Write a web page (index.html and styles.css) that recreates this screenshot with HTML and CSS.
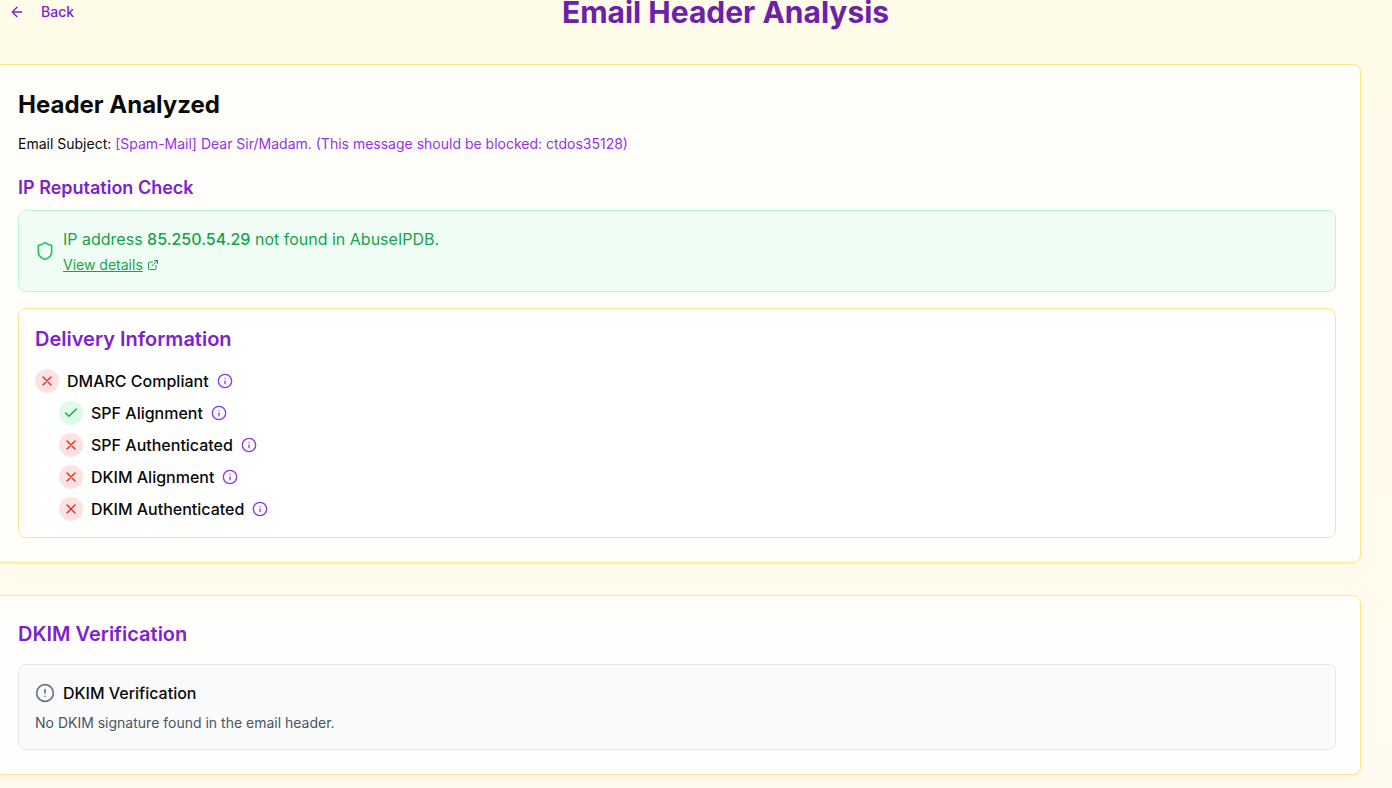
FILE: index.html
```html
<!DOCTYPE html>
<html lang="en">
<head>
<meta charset="utf-8">
<meta name="viewport" content="width=device-width, initial-scale=1">
<title>Email Header Analysis</title>
<link rel="stylesheet" href="styles.css">
</head>
<body>
<svg class="symbols" aria-hidden="true">
  <symbol id="arrow-left" viewBox="0 0 24 24"><path d="m12 19-7-7 7-7M19 12H5"/></symbol>
  <symbol id="shield" viewBox="0 0 24 24"><path d="M20 13c0 5-3.5 7.5-7.66 8.95a1 1 0 0 1-.67-.01C7.5 20.5 4 18 4 13V6a1 1 0 0 1 1-1c2 0 4.500-1.200 6.240-2.720a1.170 1.170 0 0 1 1.520 0C14.510 3.810 17 5 19 5a1 1 0 0 1 1 1z"/></symbol>
  <symbol id="external" viewBox="0 0 24 24"><path d="M15 3h6v6M10 14 21 3M18 13v6a2 2 0 0 1-2 2H5a2 2 0 0 1-2-2V8a2 2 0 0 1 2-2h6"/></symbol>
  <symbol id="cross" viewBox="0 0 24 24"><path d="M18 6 6 18M6 6l12 12"/></symbol>
  <symbol id="check" viewBox="0 0 24 24"><path d="M20 6 9 17l-5-5"/></symbol>
  <symbol id="info" viewBox="0 0 24 24"><circle cx="12" cy="12" r="10"/><path d="M12 16v-4M12 8h.01"/></symbol>
  <symbol id="alert" viewBox="0 0 24 24"><circle cx="12" cy="12" r="10"/><path d="M12 8v4M12 16h.01"/></symbol>
</svg>
<div class="page">
  <header class="page-header">
    <button class="back" type="button"><svg class="icon"><use href="#arrow-left"/></svg>Back</button>
    <h1>Email Header Analysis</h1>
    <div></div>
  </header>
  <main class="cards">
    <section class="card">
      <h2 class="card-title">Header Analyzed</h2>
      <p class="subject">Email Subject: <span class="subject-text">[Spam-Mail] Dear Sir/Madam. (This message should be blocked: ctdos35128)</span></p>
      <h3 class="reputation-title">IP Reputation Check</h3>
      <div class="notice">
        <svg class="icon icon-large shield"><use href="#shield"/></svg>
        <div>
          <p>IP address <strong>85.250.54.29</strong> not found in AbuseIPDB.</p>
          <a class="details" href="#details"><span>View details</span><svg class="icon icon-small"><use href="#external"/></svg></a>
        </div>
      </div>
      <div class="delivery">
        <h3 class="section-title">Delivery Information</h3>
        <ul class="checks">
          <li><span class="status fail"><svg class="icon"><use href="#cross"/></svg></span>DMARC Compliant<button class="info" type="button" aria-label="About DMARC compliance"><svg class="icon"><use href="#info"/></svg></button></li>
          <li class="nested"><span class="status pass"><svg class="icon"><use href="#check"/></svg></span>SPF Alignment<button class="info" type="button" aria-label="About SPF alignment"><svg class="icon"><use href="#info"/></svg></button></li>
          <li class="nested"><span class="status fail"><svg class="icon"><use href="#cross"/></svg></span>SPF Authenticated<button class="info" type="button" aria-label="About SPF authentication"><svg class="icon"><use href="#info"/></svg></button></li>
          <li class="nested"><span class="status fail"><svg class="icon"><use href="#cross"/></svg></span>DKIM Alignment<button class="info" type="button" aria-label="About DKIM alignment"><svg class="icon"><use href="#info"/></svg></button></li>
          <li class="nested"><span class="status fail"><svg class="icon"><use href="#cross"/></svg></span>DKIM Authenticated<button class="info" type="button" aria-label="About DKIM authentication"><svg class="icon"><use href="#info"/></svg></button></li>
        </ul>
      </div>
    </section>
    <section class="card">
      <h2 class="section-title">DKIM Verification</h2>
      <div class="result">
        <h3 class="result-title"><svg class="icon icon-large"><use href="#alert"/></svg>DKIM Verification</h3>
        <p class="result-text">No DKIM signature found in the email header.</p>
      </div>
    </section>
  </main>
</div>
</body>
</html>
```
FILE: styles.css
```css
*, *::before, *::after { box-sizing: border-box; }

body {
  display: flow-root;
  min-height: 100vh;
  margin: 0;
  overflow: hidden;
  background: linear-gradient(to bottom, #fffbe9, #fffaee);
  color: #0a0a0a;
  font-family: Inter, "Liberation Sans", sans-serif;
  font-size: 16px;
  line-height: 24px;
}

h1, h2, h3, p, ul { margin: 0; padding: 0; }
button { margin: 0; padding: 0; border: 0; background: none; font: inherit; cursor: pointer; }

.symbols { display: none; }
.icon {
  flex: none;
  width: 16px;
  height: 16px;
  fill: none;
  stroke: currentColor;
  stroke-width: 2;
  stroke-linecap: round;
  stroke-linejoin: round;
}
.icon-small { width: 12px; height: 12px; }
.icon-large { width: 20px; height: 20px; }

/* The page sits slightly past the top-left corner, as when scrolled. */
.page { margin: -8px 31px 0 -7px; }

.page-header {
  display: flex;
  align-items: center;
  justify-content: space-between;
  margin-bottom: 32px;
}
.page-header h1 { color: #6b21a8; font-size: 30px; font-weight: 700; line-height: 36px; }
.back {
  display: flex;
  align-items: center;
  gap: 16px;
  height: 40px;
  padding: 0 16px;
  color: #7e22ce;
  font-size: 14px;
  font-weight: 500;
  line-height: 20px;
}

.cards { display: grid; gap: 32px; padding-bottom: 32px; }
.card {
  padding: 24px;
  border: 1px solid #fde68a;
  border-radius: 8px;
  background: rgba(255, 255, 255, 0.8);
  box-shadow: 0 1px 2px rgba(0, 0, 0, 0.05);
}
.card-title { margin-bottom: 12px; font-size: 24px; font-weight: 700; line-height: 32px; }
.subject { margin-bottom: 19px; font-size: 14px; line-height: 22px; }
.subject-text { color: #9333ea; }
.reputation-title { margin-bottom: 8px; color: #7e22ce; font-size: 18px; font-weight: 600; line-height: 28px; }
.section-title { margin-bottom: 16px; color: #7e22ce; font-size: 20px; font-weight: 600; line-height: 28px; }

.notice {
  display: flex;
  align-items: center;
  gap: 8px;
  margin-bottom: 16px;
  padding: 16px;
  border: 1px solid #bbf7d0;
  border-radius: 8px;
  background: #f0fdf4;
  color: #16a34a;
}
.notice strong { font-weight: 500; }
.shield { color: #22c55e; }
.details {
  display: flex;
  align-items: center;
  gap: 4px;
  width: fit-content;
  margin-top: 4px;
  color: inherit;
  font-size: 14px;
  line-height: 20px;
}

.delivery { padding: 16px; border: 1px solid #fde68a; border-radius: 8px; background: #fff; }
.checks { display: grid; gap: 8px; list-style: none; font-weight: 500; }
.checks li { display: flex; align-items: center; gap: 8px; }
.checks .nested { padding-left: 24px; }
.status { display: grid; place-items: center; width: 24px; height: 24px; border-radius: 50%; }
.fail { background: #fee2e2; color: #dc2626; }
.pass { background: #dcfce7; color: #16a34a; }
.info { display: grid; color: #9333ea; }

.result { padding: 16px; border: 1px solid #e5e7eb; border-radius: 8px; background: #f9fafb; }
.result-title { display: flex; align-items: center; gap: 8px; margin-bottom: 8px; font-size: 16px; font-weight: 500; line-height: 24px; }
.result-title .icon { color: #6b7280; }
.result-text { color: #4b5563; font-size: 14px; line-height: 20px; }
```
